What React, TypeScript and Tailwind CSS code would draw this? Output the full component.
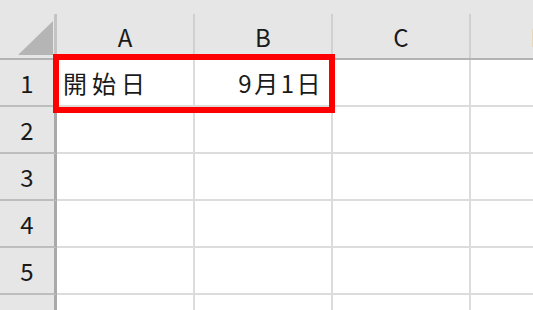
const COLS = ['A', 'B', 'C', 'D'];
const ROWS = [1, 2, 3, 4, 5, 6];

const font = { fontFamily: '"Noto Sans CJK JP", "Liberation Sans", sans-serif' };

function CornerCell() {
    return (
        <div className="h-[44px] w-[57px] shrink-0 border-r-[3px] border-[#c4c4c4] relative">
            <svg className="absolute left-[18px] top-[7px]" width="35" height="34" viewBox="0 0 35 34">
                <polygon points="0,34 35,34 35,0" fill="#b5b5b5" />
            </svg>
        </div>
    );
}

export default function App() {
    return (
        <div className="relative w-[533px] h-[310px] overflow-hidden bg-white text-[#1a1a1a]" style={font}>
            {/* column header */}
            <div className="flex items-end h-[60px] bg-[#e6e6e6] border-b-2 border-[#b3b3b3]">
                <CornerCell />
                {COLS.map((c) => (
                    <div
                        key={c}
                        className="h-[44px] w-[138px] shrink-0 border-r-2 border-[#d0d0d0] flex items-center justify-center text-[24px] pt-[2px]"
                    >
                        {c}
                    </div>
                ))}
            </div>

            {/* rows */}
            {ROWS.map((r) => (
                <div key={r} className="flex h-[47px]">
                    <div className="w-[57px] shrink-0 bg-[#e6e6e6] border-r-[3px] border-b-2 border-r-[#a9a9a9] border-b-[#bdbdbd] flex items-center justify-center text-[24px]">
                        {r}
                    </div>
                    {COLS.map((c) => (
                        <div
                            key={c}
                            className="w-[138px] shrink-0 border-r-2 border-b-2 border-[#dcdcdc] flex items-center text-[24px] px-[6px]"
                        >
                            {r === 1 && c === 'A' && <span className="tracking-[5px]">開始日</span>}
                            {r === 1 && c === 'B' && (
                                <span className="ml-auto pr-[4px] tracking-[2.5px] -mr-[2px]">9月1日</span>
                            )}
                        </div>
                    ))}
                </div>
            ))}

            {/* selection highlight */}
            <div className="absolute left-[53px] top-[54px] w-[282px] h-[59px] border-[6px] border-[#ff0000]" />
        </div>
    );
}
